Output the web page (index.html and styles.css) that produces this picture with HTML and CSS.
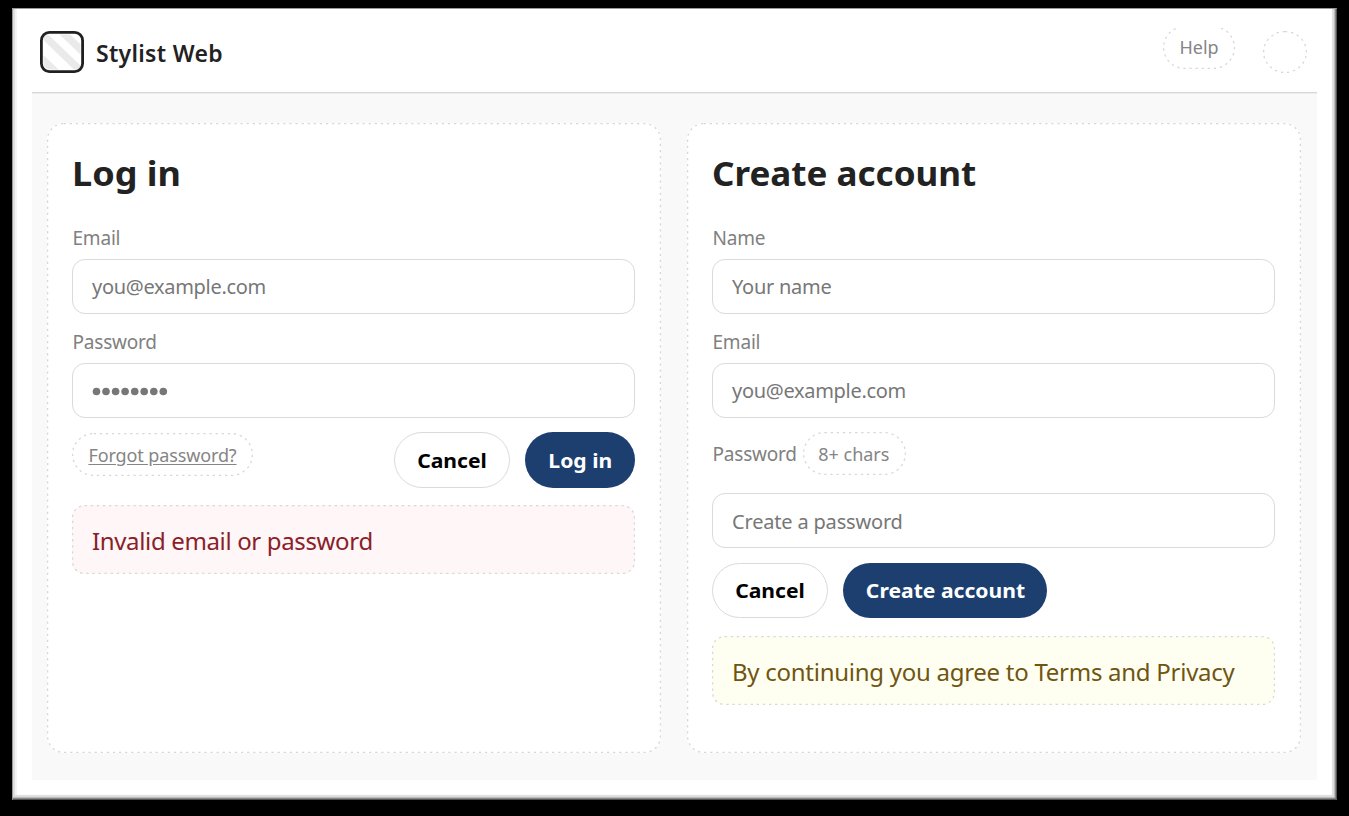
FILE: index.html
```
<!DOCTYPE html>
<html lang="en">
<head>
<meta charset="utf-8">
<title>Stylist Web</title>
<link rel="stylesheet" href="styles.css">
</head>
<body>
<div class="frame">
  <header class="header">
    <svg class="logo" width="44" height="42" viewBox="0 0 44 42">
      <defs><clipPath id="mark"><rect x="3.5" y="3.5" width="37" height="35" rx="4"/></clipPath></defs>
      <g clip-path="url(#mark)" stroke="#eaeaea" stroke-width="7.4">
        <path d="M-5 -4L45 44M17 -4L57 34M-17 10L17 42"/>
      </g>
      <rect x="1.4" y="1.4" width="41.2" height="39.2" rx="8" fill="none" stroke="#202020" stroke-width="2.8"/>
    </svg>
    <span class="brand"><span class="t">Stylist Web</span></span>
    <span class="pill help"><svg class="dash"><rect rx="21"/></svg><span class="t">Help</span></span>
    <span class="avatar"><svg class="dash"><rect rx="21.5"/></svg></span>
  </header>
  <main class="main">
    <section class="card">
      <svg class="dash"><rect rx="16"/></svg>
      <h1 class="title title-login"><span class="t">Log in</span></h1>
      <div class="label"><span class="t">Email</span></div>
      <div class="input email"><span class="t">you@example.com</span></div>
      <div class="label"><span class="t">Password</span></div>
      <div class="input"><svg width="76" height="10" fill="#777"><circle cx="4.5" cy="5.5" r="3.8"/><circle cx="14" cy="5.5" r="3.8"/><circle cx="23.6" cy="5.5" r="3.8"/><circle cx="33.1" cy="5.5" r="3.8"/><circle cx="42.7" cy="5.5" r="3.8"/><circle cx="52.2" cy="5.5" r="3.8"/><circle cx="61.8" cy="5.5" r="3.8"/><circle cx="71.3" cy="5.5" r="3.8"/></svg></div>
      <div class="actions">
        <span class="pill forgot"><svg class="dash"><rect rx="21"/></svg><span class="t">Forgot password?</span></span>
        <button class="btn cancel"><span class="t">Cancel</span></button>
        <button class="btn primary login"><span class="t">Log in</span></button>
      </div>
      <div class="alert error"><svg class="dash"><rect rx="12"/></svg><span class="t">Invalid email or password</span></div>
    </section>
    <section class="card">
      <svg class="dash"><rect rx="16"/></svg>
      <h1 class="title title-create"><span class="t">Create account</span></h1>
      <div class="label"><span class="t">Name</span></div>
      <div class="input name"><span class="t">Your name</span></div>
      <div class="label"><span class="t">Email</span></div>
      <div class="input email"><span class="t">you@example.com</span></div>
      <div class="label label-row"><span class="t">Password</span><span class="pill chars"><svg class="dash"><rect rx="21"/></svg><span class="t">8+ chars</span></span></div>
      <div class="input newpass"><span class="t">Create a password</span></div>
      <div class="actions actions-start">
        <button class="btn cancel"><span class="t">Cancel</span></button>
        <button class="btn primary create"><span class="t">Create account</span></button>
      </div>
      <div class="alert notice"><svg class="dash"><rect rx="12"/></svg><span class="t">By continuing you agree to Terms and Privacy</span></div>
    </section>
  </main>
</div>
</body>
</html>
```
FILE: styles.css
```
* { box-sizing: border-box; }
body {
  margin: 0;
  height: 816px;
  padding: 8px 12px 16px 12px;
  background: #000;
  overflow: hidden;
  font-family: "Noto Sans", "Open Sans", sans-serif;
  color: #222;
}
.frame {
  height: 792px;
  padding: 20px;
  background: #fff;
  border-radius: 1px;
  box-shadow: inset 1px 1px 0 #999, inset -1px -1px 0 #555, inset -2px -2px 0 #888,
    inset -3px -3px 0 #bbb, inset -5px -5px 1px #ddd, inset 3px 0 1px #ddd, inset 5px 0 1px #f3f3f3;
}
.t { white-space: nowrap; }
.header {
  display: flex;
  align-items: flex-start;
  height: 66px;
  padding: 3px 10px 0 8px;
  border-bottom: 1px solid #ececec;
  box-shadow: inset 0 -1px 0 #d8d8d8;
  overflow: hidden;
}
.logo { flex: none; }
.brand { margin: 4px auto 0 12px; font-size: 23px; line-height: 36px; font-weight: 600; letter-spacing: .3px; }
.dash {
  position: absolute;
  inset: 0;
  width: 100%;
  height: 100%;
  overflow: visible;
  pointer-events: none;
}
.dash rect {
  x: .6px;
  y: .6px;
  width: calc(100% - 1.2px);
  height: calc(100% - 1.2px);
  fill: none;
  stroke: #d8d8d8;
  stroke-width: 1.3px;
  stroke-dasharray: 2.3 3.8;
}
.pill {
  position: relative;
  display: flex;
  align-items: center;
  justify-content: center;
  height: 43px;
  color: #858585;
  font-size: 18px;
}
.help { width: 72px; margin: -5px 28px 0 0; padding-bottom: 1px; }
.avatar { position: relative; width: 44px; height: 42px; }
.main {
  display: grid;
  grid-template-columns: 614px 614px;
  gap: 26px;
  height: 686px;
  padding: 29px 0 0 15px;
  background: #f9f9f9;
}
.card {
  position: relative;
  height: 630px;
  padding: 26px 26px 0 25px;
  border-radius: 16px;
  background: #fff;
}
.title { margin: 0; height: 74px; font-size: 34px; line-height: 49px; font-weight: 700; }
.title .t { display: inline-block; transform-origin: left; }
.title-login .t { transform: scaleX(1.06); }
.title-create .t { transform: scaleX(1.03); }
.label {
  height: 35px;
  margin-bottom: 1px;
  padding: 2px 0 0 .5px;
  color: #808080;
  font-size: 19px;
  line-height: 27px;
  letter-spacing: -.2px;
}
.input {
  display: flex;
  align-items: center;
  height: 55px;
  margin-bottom: 13px;
  padding: 0 19px;
  border: 1.5px solid #dadada;
  border-radius: 13px;
  color: #777;
  font-size: 20px;
  letter-spacing: -.25px;
}
.email { letter-spacing: -.3px; }
.newpass { letter-spacing: -.18px; padding-top: 1px; }
.label-row { display: flex; gap: 6px; height: 43px; margin: 14px 0 18px; padding-top: 0; }
.label-row > .t { line-height: 45px; }
.chars { width: 103px; letter-spacing: 0; padding: 1px 1px 0 0; }
.actions { display: flex; height: 56px; margin: 14px 0 17px; }
.actions-start { height: 55px; margin: 15px 0 18px; }
.forgot {
  width: 181px;
  margin: 1px auto 0 0;
  text-decoration: underline;
  text-underline-offset: 2px;
  letter-spacing: -.12px;
}
.btn {
  display: flex;
  align-items: center;
  justify-content: center;
  height: 100%;
  margin: 0;
  padding: 0;
  border: 1.5px solid #dadada;
  border-radius: 28px;
  background: #fff;
  color: #000;
  font: 700 20px "Noto Sans", "Open Sans", sans-serif;
}
.btn .t { display: inline-block; transform: scaleX(1.055); }
.cancel { width: 116px; margin-right: 15px; }
.primary { border: 0; background: #1c3f70; color: #fff; }
.login { width: 110px; }
.create { width: 204px; }
.alert {
  position: relative;
  display: flex;
  align-items: center;
  height: 69px;
  padding: 2px 20px 0;
  border-radius: 12px;
  font-size: 24px;
}
.error { background: #fff6f7; color: #8a2028; letter-spacing: -.35px; }
.notice { background: #fffff1; color: #705511; letter-spacing: -.27px; }
```
